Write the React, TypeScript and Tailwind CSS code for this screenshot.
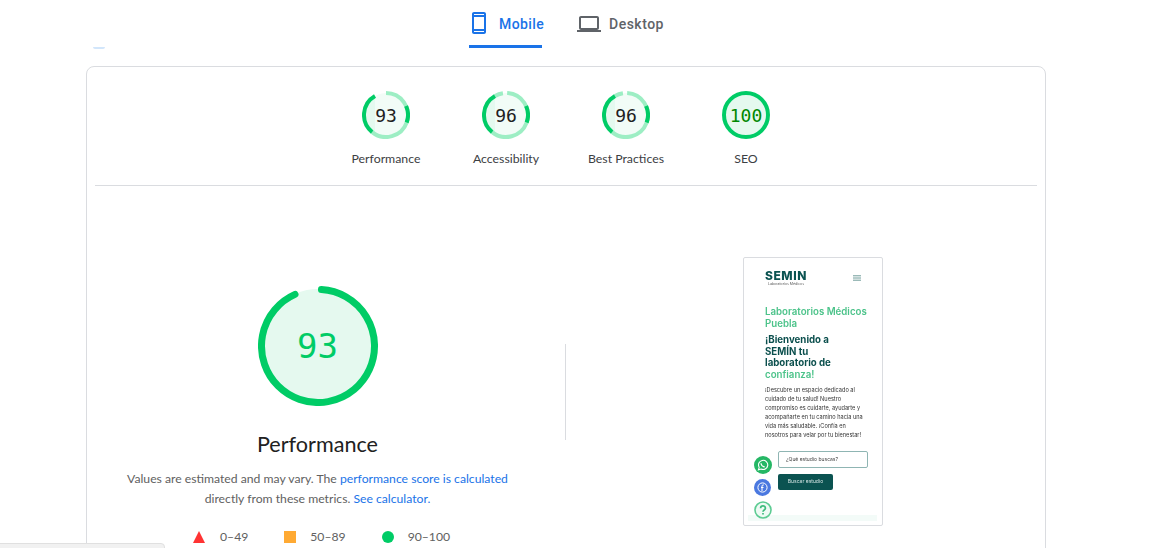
const SANS = "font-['Lato',sans-serif]";

function Arc({ from, to, r, color, width, cap = "butt", c }: { from: number; to: number; r: number; color: string; width: number; cap?: "butt" | "round"; c: number }) {
  const p = (a: number) => {
    const t = ((a - 90) * Math.PI) / 180;
    return `${c + r * Math.cos(t)} ${c + r * Math.sin(t)}`;
  };
  return <path d={`M${p(from)} A${r} ${r} 0 ${to - from > 180 ? 1 : 0} 1 ${p(to)}`} fill="none" stroke={color} strokeWidth={width} strokeLinecap={cap} />;
}

function SmallGauge({ score, label, full, tail }: { score: string; label: string; full?: boolean; tail?: boolean }) {
  const id = `left-${label.replace(" ", "")}`;
  return (
    <div className="flex w-[120px] flex-col items-center">
      <div className="relative flex h-[48px] w-[48px] items-center justify-center">
        <svg width="48" height="48" viewBox="0 0 48 48" className="absolute inset-0">
          <defs>
            <clipPath id={id}>
              <rect x="0" y="0" width="13" height="48" />
            </clipPath>
          </defs>
          {full ? (
            <>
              <circle cx="24" cy="24" r="22" fill="#e5f9ef" />
              <circle cx="24" cy="24" r="22" fill="none" stroke="#00cc66" strokeWidth="4" />
            </>
          ) : (
            <>
              <circle cx="24" cy="24" r="22" fill="#f2fcf7" />
              <circle cx="24" cy="24" r="22" fill="#e5f9ef" clipPath={`url(#${id})`} />
              <Arc c={24} r={22} width={4} color="#9deec4" from={tail ? 3 : 0} to={219} />
              {tail && <Arc c={24} r={22} width={4} color="#9deec4" from={330} to={352} />}
              <Arc c={24} r={22} width={4} color="#00cc66" from={219} to={330} />
              <Arc c={24} r={22} width={4} color="#00cc66" from={66} to={110} />
            </>
          )}
        </svg>
        <span className={`relative font-['DejaVu_Sans_Mono',monospace] text-[18px] ${full ? "text-[#008800]" : "text-[#212121]"}`}>{score}</span>
      </div>
      <div className="mt-[11px] text-[12.3px] leading-[18px] text-[#3c4043]">{label}</div>
    </div>
  );
}

function Preview() {
  return (
    <div className="relative h-[269px] w-[140px] rounded-[2px] border border-[#dadce0] bg-white font-['Inter',sans-serif]">
      <div className="absolute bottom-[4px] left-[4px] right-[5px] h-[6px] bg-[#f3fbf8]" />
      <div className="flex h-[48px] items-start justify-between pl-[21px] pr-[21px] pt-[11px] blur-[0.3px]">
        <div className="flex w-[42px] flex-col items-center">
          <span className="text-[12px] font-extrabold leading-[13px] tracking-[0.6px] text-[#0b5351]">SEMIN</span>
          <span className="whitespace-nowrap text-[3.5px] leading-[5px] text-[#555]">Laboratorios Médicos</span>
        </div>
        <svg width="8" height="6" viewBox="0 0 8 6" className="mt-[6px]">
          <path d="M0 .8h8M0 3h8M0 5.2h8" stroke="#6f9c99" strokeWidth="1" />
        </svg>
      </div>
      <div className="px-[21px] blur-[0.3px]">
        <div className="w-[106px] text-[9.7px] font-semibold leading-[11.5px] text-[#4cc38a]">Laboratorios Médicos Puebla</div>
        <div className="mt-[5px] w-[72px] text-[9.7px] font-bold leading-[11.5px] text-[#0b4f4d]">
          ¡Bienvenido a SEMÍN tu laboratorio de <span className="font-semibold text-[#4cc38a]">confianza!</span>
        </div>
        <div className="mt-[6px] w-[104px] text-[5.6px] leading-[8.9px] text-[#333]">
          ¡Descubre un espacio dedicado al cuidado de tu salud! Nuestro compromiso es cuidarte, ayudarte y acompañarte en tu camino hacia una vida más saludable. ¡Confía en nosotros para velar por tu bienestar!
        </div>
      </div>
      <div className="absolute left-[34px] top-[193px] flex h-[17px] w-[90px] items-center rounded-[2px] border border-[#8fb5b3] pl-[7px] text-[5px] text-[#444] blur-[0.2px]">¿Qué estudio buscas?</div>
      <div className="absolute left-[34px] top-[216px] flex h-[16px] w-[55px] items-center justify-center rounded-[2px] bg-[#0b5351] text-[5px] text-[#d5e5e4] blur-[0.2px]">Buscar estudio</div>
      <div className="absolute left-[10px] top-[198px] flex h-[18px] w-[18px] items-center justify-center rounded-full bg-[#25b765]">
        <svg width="12" height="12" viewBox="0 0 12 12"><path d="M1.4 10.8l.8-2.5A4.6 4.6 0 1 1 4 10z" fill="none" stroke="#fff" strokeWidth="1.1" /><path d="M4 4.2c.2 2 1.6 3.4 3.7 3.7" fill="none" stroke="#fff" strokeWidth="1.2" /></svg>
      </div>
      <div className="absolute left-[10px] top-[221px] flex h-[17px] w-[17px] items-center justify-center rounded-full bg-[#4a78e0]">
        <svg width="11" height="11" viewBox="0 0 11 11"><circle cx="5.5" cy="5.5" r="4.6" fill="none" stroke="#fff" strokeWidth="1" /><path d="M6.8 3H6c-.7 0-1 .4-1 1v5M4 5.5h2.5" fill="none" stroke="#fff" strokeWidth="1" /></svg>
      </div>
      <div className="absolute left-[10px] top-[243px] h-[18px] w-[18px]">
        <svg width="18" height="18" viewBox="0 0 18 18"><circle cx="9" cy="9" r="8" fill="#eefaf4" stroke="#5ccb92" strokeWidth="1.6" /><path d="M6.6 7.2c0-3 4.8-3 4.8 0 0 1.8-2.4 1.7-2.4 3.6M9 12v1.5" fill="none" stroke="#3dbb7c" strokeWidth="1.7" /></svg>
      </div>
    </div>
  );
}

export default function App() {
  return (
    <div className={`relative h-[548px] w-[1162px] overflow-hidden bg-white ${SANS}`}>
      <div className="flex h-[48px] gap-[35px] pl-[469px]">
        <div className="flex h-[48px] w-[73px] items-center gap-[8px] whitespace-nowrap border-b-[3px] border-[#1a73e8] pt-[1px] font-['Roboto',sans-serif] text-[14px] font-medium tracking-[0.4px] text-[#1a73e8]">
          <svg width="24" height="24" viewBox="0 0 24 24" fill="currentColor" className="-ml-[2px] shrink-0">
            <path d="M17 1.01L7 1c-1.1 0-2 .9-2 2v18c0 1.1.9 2 2 2h10c1.1 0 2-.9 2-2V3c0-1.1-.9-1.99-2-1.99zM17 21H7v-1h10v1zm0-3H7V6h10v12zm0-14H7V3h10v1z" />
          </svg>
          <span className="mt-[2px]">Mobile</span>
        </div>
        <div className="flex h-[48px] items-center gap-[8px] pb-[1px] font-['Roboto',sans-serif] text-[14px] font-medium tracking-[0.5px] text-[#5f6368]">
          <svg width="24" height="24" viewBox="0 0 24 24" fill="currentColor" className="shrink-0">
            <path d="M20 18c1.1 0 1.99-.9 1.99-2L22 6c0-1.1-.9-2-2-2H4c-1.1 0-2 .9-2 2v10c0 1.1.9 2 2 2H0v2h24v-2h-4zM4 6h16v10H4V6z" />
          </svg>
          <span className="mt-[2px]">Desktop</span>
        </div>
      </div>
      <div className="absolute left-[93px] top-[47px] h-[2px] w-[12px] rounded-b-full bg-[#d2e6fb]" />

      <div className="ml-[86px] mt-[18px] h-[600px] w-[960px] rounded-[8px] border border-[#dadce0] px-[8px]">
        <div className="flex h-[119px] justify-center border-b border-[#dadce0] pt-[24px]">
          <SmallGauge score="93" label="Performance" />
          <SmallGauge score="96" label="Accessibility" tail />
          <SmallGauge score="96" label="Best Practices" tail />
          <SmallGauge score="100" label="SEO" full />
        </div>
        <div className="flex">
          <div className="flex w-[445px] flex-col items-center pt-[100px]">
            <div className="relative flex h-[120px] w-[120px] items-center justify-center">
              <svg width="120" height="120" viewBox="0 0 120 120" className="absolute inset-0">
                <circle cx="60" cy="60" r="57" fill="#e5f9ef" />
                <Arc c={60} r={56.5} width={7} color="#00cc66" cap="round" from={3.5} to={336} />
              </svg>
              <span className="relative font-['DejaVu_Sans_Mono',monospace] text-[34px] text-[#00cc66]">93</span>
            </div>
            <div className="mt-[21px] text-[21.6px] leading-[34px] text-[#212121]">Performance</div>
            <p className="mt-[8px] w-[400px] text-center text-[12.2px] leading-[20px] text-[#616161]">
              Values are estimated and may vary. The <span className="text-[#1a73e8]">performance score is calculated</span> directly from these metrics. <span className="text-[#1a73e8]">See calculator.</span>
            </p>
            <div className="mt-[18px] flex w-[263px] items-center self-start ml-[98px] text-[12.2px] leading-[20px] text-[#616161]">
              <svg width="12" height="12" viewBox="0 0 12 12" className="mr-[15px] shrink-0"><path d="M6 0l6 12H0z" fill="#ff3333" /></svg>
              <span className="mr-[36px]">0–49</span>
              <span className="mr-[14px] h-[12px] w-[12px] shrink-0 bg-[#ffaa33]" />
              <span className="mr-[36px]">50–89</span>
              <span className="mr-[14px] h-[12px] w-[12px] shrink-0 rounded-full bg-[#00cc66]" />
              <span className="whitespace-nowrap">90–100</span>
            </div>
          </div>
          <div className="ml-[25px] mt-[158px] h-[96px] w-px bg-[#dadce0]" />
          <div className="flex flex-1 justify-center pl-[23px] pt-[71px]">
            <Preview />
          </div>
        </div>
      </div>

      <div className="absolute -left-[1px] top-[543px] h-[12px] w-[166px] rounded-tr-[4px] border border-[#e0e0e0] bg-[#f1f1f1]" />
    </div>
  );
}
